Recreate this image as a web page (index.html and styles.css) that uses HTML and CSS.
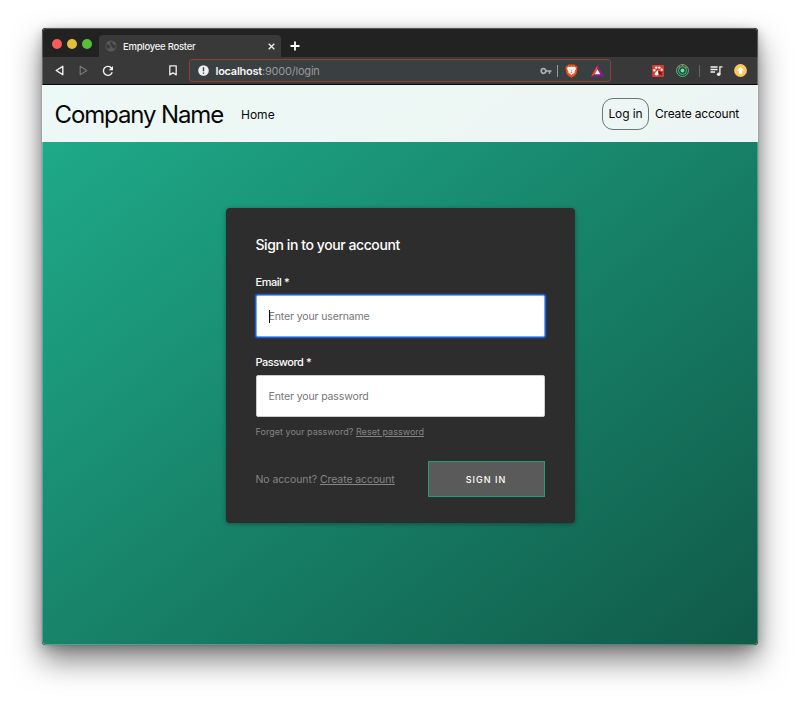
FILE: index.html
```
<!DOCTYPE html>
<html lang="en">
<head>
<meta charset="utf-8">
<title>Employee Roster</title>
<link rel="stylesheet" href="styles.css">
</head>
<body>
<div class="window">
  <div class="tabs">
    <div class="lights"><i class="red"></i><i class="yellow"></i><i class="green"></i></div>
    <div class="tab">
      <svg class="globe" width="12" height="12" viewBox="0 0 12 12"><circle cx="6" cy="6" r="5.5" fill="#55585c"/><path d="M1.200 4.300l2.500.5 1.800 1.700-.8 1.500-1 .9C2 8.500 1 6.500 1.200 4.300zM6 1.500l1.800.8-.6 1.500L9.500 5l1.300.2c0 2-.8 3-1.800 3.800L7.500 7.500 6 5.500 5 3.300z" fill="#37393b"/></svg>
      <span class="tab-title">Employee Roster</span>
      <svg class="close" width="7" height="7" viewBox="0 0 7 7"><path d="M.7.7l5.600 5.600M6.300.7L.7 6.300" stroke="#eee" stroke-width="1.300"/></svg>
    </div>
    <svg class="plus" width="10" height="10" viewBox="0 0 10 10"><path d="M5 .5v9M.5 5h9" stroke="#fff" stroke-width="1.800"/></svg>
  </div>
  <div class="toolbar">
    <svg class="back" width="9" height="11" viewBox="0 0 9 11"><path d="M7.800 1.300v8.400L1.200 5.500z" fill="none" stroke="#f1f1f1" stroke-width="1.400" stroke-linejoin="round"/></svg>
    <svg class="forward" width="9" height="11" viewBox="0 0 9 11"><path d="M1.200 1.300v8.400l6.600-4.200z" fill="none" stroke="#777" stroke-width="1.200" stroke-linejoin="round"/></svg>
    <svg class="reload" width="12" height="12" viewBox="0 0 12 12"><path d="M9.600 3.200A4.500 4.500 0 1 0 10.200 7.300" fill="none" stroke="#f1f1f1" stroke-width="1.400"/><path d="M11 1v4.300H6.700z" fill="#f1f1f1"/></svg>
    <svg class="bookmark" width="8" height="11" viewBox="0 0 8 11"><path d="M.8.8h6.400v9.100L4 7.800.8 9.900z" fill="none" stroke="#eee" stroke-width="1.300" stroke-linejoin="round"/></svg>
    <div class="address">
      <svg class="info" width="11" height="11" viewBox="0 0 11 11"><circle cx="5.500" cy="5.500" r="5.300" fill="#f1f1f1"/><path d="M5.500 2.200v4M5.500 7.400v1.300" stroke="#3a3f42" stroke-width="1.400"/></svg>
      <span class="url"><b>localhost</b><span class="path">:9000/login</span></span>
      <svg class="key" width="12" height="8" viewBox="0 0 12 8"><circle cx="3.500" cy="4" r="2.300" fill="none" stroke="#b0b0b0" stroke-width="1.700"/><path d="M6 4h5.500M9.500 4v2.700" stroke="#b0b0b0" stroke-width="1.700"/></svg>
      <i class="divider light"></i>
      <svg class="lion" width="13" height="14" viewBox="0 0 13 14"><path d="M3.500.5h6l1 1.200 1.500.2.500 2-1 5.600-1.500 2-3.500 2.200L3 11.500l-1.500-2-1-5.600.5-2 1.500-.2z" fill="#f1501f"/><path d="M3 2.700l2 .4 1.500-.3 1.500.3 2-.4L11 4.500 9.500 7.700l.2 1.100-1.700.9-1.500 1.400L5 9.700l-1.700-.9.200-1.100L2 4.500z" fill="#fff"/><path d="M3.900 4.800l1.700.4-.5.500zM9.100 4.800l-1.700.4.500.5zM6.300 5.600h.4l.2 1.700-.4.400-.4-.4zM5.200 8.500l1.300-.4 1.300.4-1.300.6z" fill="#f1501f"/></svg>
      <svg class="bat" width="13" height="12" viewBox="0 0 13 12"><path d="M6.500.3L0 11.700h13z" fill="#75238d"/><path d="M6.500.3L0 11.700l4-2.600 2.500-4.300z" fill="#ff4b1f"/><path d="M6.500.3v4.500L9 9.100l4 2.600z" fill="#8d2184"/><path d="M6.500 4.500L3.800 9.300h5.400z" fill="#fff"/></svg>
    </div>
    <svg class="ext" width="12" height="12" viewBox="0 0 12 12"><rect width="12" height="12" rx="1" fill="#d83a32"/><g fill="#fff"><circle cx="2.300" cy="5.300" r="1.200"/><circle cx="4.200" cy="2.600" r="1.200"/><circle cx="7.300" cy="2.600" r="1.200"/><circle cx="9.700" cy="4.700" r="1.200"/><path d="M2.700 9.300c0-1.800 1.400-2 2.300-3.500.7-.6 1.500-.4 1.900.3l-1 .2.600 3.700c-1.300.3-3.800 1-3.800-.7z"/></g><path d="M6.400 6l4 1.500-1.300.8 1.300 1.500-.9.800-1.300-1.500-.9 1.300z" fill="#53211f"/></svg>
    <svg class="rings" width="13" height="13" viewBox="0 0 13 13"><circle cx="6.500" cy="6.500" r="6" fill="#25483d" stroke="#4bc58b" stroke-width=".9"/><circle cx="6.500" cy="6.500" r="4" fill="none" stroke="#4bc58b" stroke-width=".9"/><circle cx="6.500" cy="6.500" r="1.900" fill="#6ae4aa"/><path d="M2.300 2.300l1.700 1.400M6.500.5v1.500" stroke="#ef6849" stroke-width="1.300"/><circle cx="9.700" cy="3.500" r="1" fill="#ef6849"/></svg>
    <i class="divider"></i>
    <svg class="music" width="13" height="12" viewBox="0 0 13 12"><path d="M.5 2h7M.5 4.500h7M.5 7h4.500M9.900 9V1.800h2.600" fill="none" stroke="#f1f1f1" stroke-width="1.300"/><circle cx="8.700" cy="9.200" r="1.800" fill="#f1f1f1"/></svg>
    <svg class="update" width="13" height="13" viewBox="0 0 13 13"><circle cx="6.500" cy="6.500" r="6.400" fill="#f8ca5b"/><path d="M6.500 2.900L3.200 6.500h1.700v3.300h3.200V6.500h1.700z" fill="#fff"/></svg>
  </div>
  <div class="page">
    <header class="nav">
      <span class="brand">Company Name</span>
      <a class="home">Home</a>
      <a class="login"><span>Log in</span></a>
      <a class="create">Create account</a>
    </header>
    <form class="card">
      <h1><span>Sign in to your account</span></h1>
      <label>Email *</label>
      <div class="field focused"><i class="caret"></i><span>Enter your username</span></div>
      <label>Password *</label>
      <div class="field"><span class="pass">Enter your password</span></div>
      <p class="forgot">Forget your password? <a>Reset password</a></p>
      <div class="actions">
        <p class="signup">No account? <a>Create account</a></p>
        <button type="button"><span>SIGN IN</span></button>
      </div>
    </form>
  </div>
</div>
</body>
</html>
```
FILE: styles.css
```
* { box-sizing: border-box; }
body {
  margin: 0;
  height: 701px;
  padding: 28px 42px 0;
  background: #fff;
  overflow: hidden;
  font-family: Inter, "Liberation Sans", sans-serif;
}
svg, i { display: block; flex: none; }
.window {
  position: relative;
  width: 716px;
  height: 617px;
  border-radius: 4px;
  overflow: hidden;
  background: #222;
  box-shadow: 0 15px 30px rgba(0,0,0,.5), 0 3px 12px rgba(0,0,0,.22), 0 0 1px rgba(0,0,0,.5);
}
.window::after {
  content: "";
  position: absolute;
  inset: 0;
  border: 1px solid rgba(255,255,255,.25);
  border-radius: 4px;
}
.tabs { height: 29px; display: flex; align-items: center; background: #222; }
.lights { display: flex; gap: 5px; width: 57px; padding: 2px 0 0 10px; }
.lights i { width: 10px; height: 10px; border-radius: 50%; }
.red { background: #fc5b57; }
.yellow { background: #e5bf3c; }
.green { background: #57c038; }
.tab {
  display: flex; align-items: center;
  align-self: flex-end;
  width: 182px; height: 22px;
  padding: 0 6px;
  border-radius: 4px 4px 0 0;
  background: #393939;
}
.tab-title { margin-left: 6px; color: #f0f0f0; font-size: 9.500px; font-weight: 500; letter-spacing: -.25px; white-space: nowrap; }
.close { margin-left: auto; }
.plus { margin: 7px 0 0 8.500px; }
.toolbar { height: 28px; display: flex; align-items: center; background: #393939; border-bottom: 1px solid #080808; }
.back { margin-left: 13px; }
.forward { margin-left: 15px; }
.reload { margin-left: 14px; }
.bookmark { margin-left: 55px; }
.address {
  display: flex; align-items: center;
  width: 422px; height: 23px;
  margin-left: 12px; padding-left: 8px;
  border: 1px solid #914035;
  border-radius: 3px;
  background: #3a3f42;
}
.url { margin-left: 6.500px; font-size: 11px; color: #f4f4f4; white-space: nowrap; letter-spacing: -.25px; }
.url b { font-weight: 600; }
.path { color: #97999a; letter-spacing: -.2px; }
.key { margin-left: auto; }
.divider { width: 1px; height: 12px; background: #666; }
.light { margin-left: 6px; background: #999; }
.lion { margin-left: 7px; }
.bat { margin: 0 6px 0 13px; }
.key { position: relative; left: 1px; }
.ext { margin-left: 41px; }
.rings { margin-left: 12px; }
.rings + .divider { margin-left: 10px; }
.music { margin-left: 10px; }
.update { margin-left: 11px; }
.page { height: 560px; background: linear-gradient(to bottom right, #1fae8c 0%, #105a48 100%); }
.nav {
  display: flex; align-items: center;
  height: 57px;
  padding: 0 18px 0 12.500px;
  background: rgba(255,255,255,.92);
  color: #080808;
  font-size: 12px;
  white-space: nowrap;
}
.brand { width: 186.500px; font-size: 24px; letter-spacing: -1.120px; padding-top: 1px; }
.home { padding-top: 1px; }
.login {
  display: flex; align-items: center; justify-content: center;
  width: 47px; height: 32px;
  margin: 0 6px 0 auto;
  border: 1px solid #6e7674;
  border-radius: 11px;
  letter-spacing: -.1px;
}
.create { width: 85px; letter-spacing: -.2px; }
.card {
  width: 349px; height: 315px;
  margin: 66px 0 0 183.500px;
  padding: 27px 30px 0;
  border-radius: 4px;
  background: #2d2d2d;
  box-shadow: 0 1px 4px rgba(0,0,0,.35);
}
h1 { margin: 0 0 19px; height: 20px; line-height: 20px; font-size: 14px; font-weight: 500; letter-spacing: -.42px; color: #fff; }
label { display: block; height: 16px; line-height: 16px; margin-bottom: 5px; font-size: 11px; font-weight: 500; letter-spacing: -.45px; color: #fff; }
.field {
  position: relative;
  display: flex; align-items: center;
  height: 42px; margin-bottom: 17px; padding: 1px 0 0 12px;
  border-radius: 2px;
  border: 1px solid #ccc;
  background: #fff;
  color: #757575;
  font-size: 10.500px;
  letter-spacing: -.12px;
}
.focused { border: 1px solid #78a7f2; box-shadow: 0 0 0 1px #1d5ed0, 0 0 2px 1px #1d5ed0; }
.caret { position: absolute; left: 12px; top: 14px; width: 1px; height: 13px; background: #111; }
p { margin: 0; color: #858585; white-space: nowrap; }
a { text-underline-offset: 1px; }
p a { text-decoration: underline; }
.forgot { margin-top: -10px; height: 15px; line-height: 15px; font-size: 9px; letter-spacing: .02px; }
.actions { display: flex; justify-content: space-between; align-items: center; margin-top: 22px; }
.signup { font-size: 10.500px; letter-spacing: -.09px; padding-top: 1px; }
button {
  width: 117px; height: 36px; padding: 0;
  border: 1px solid #229d7d;
  background: #5a5a5a;
  color: #fff;
  font: 500 9px Inter, sans-serif;
  letter-spacing: 1px;
}
```
